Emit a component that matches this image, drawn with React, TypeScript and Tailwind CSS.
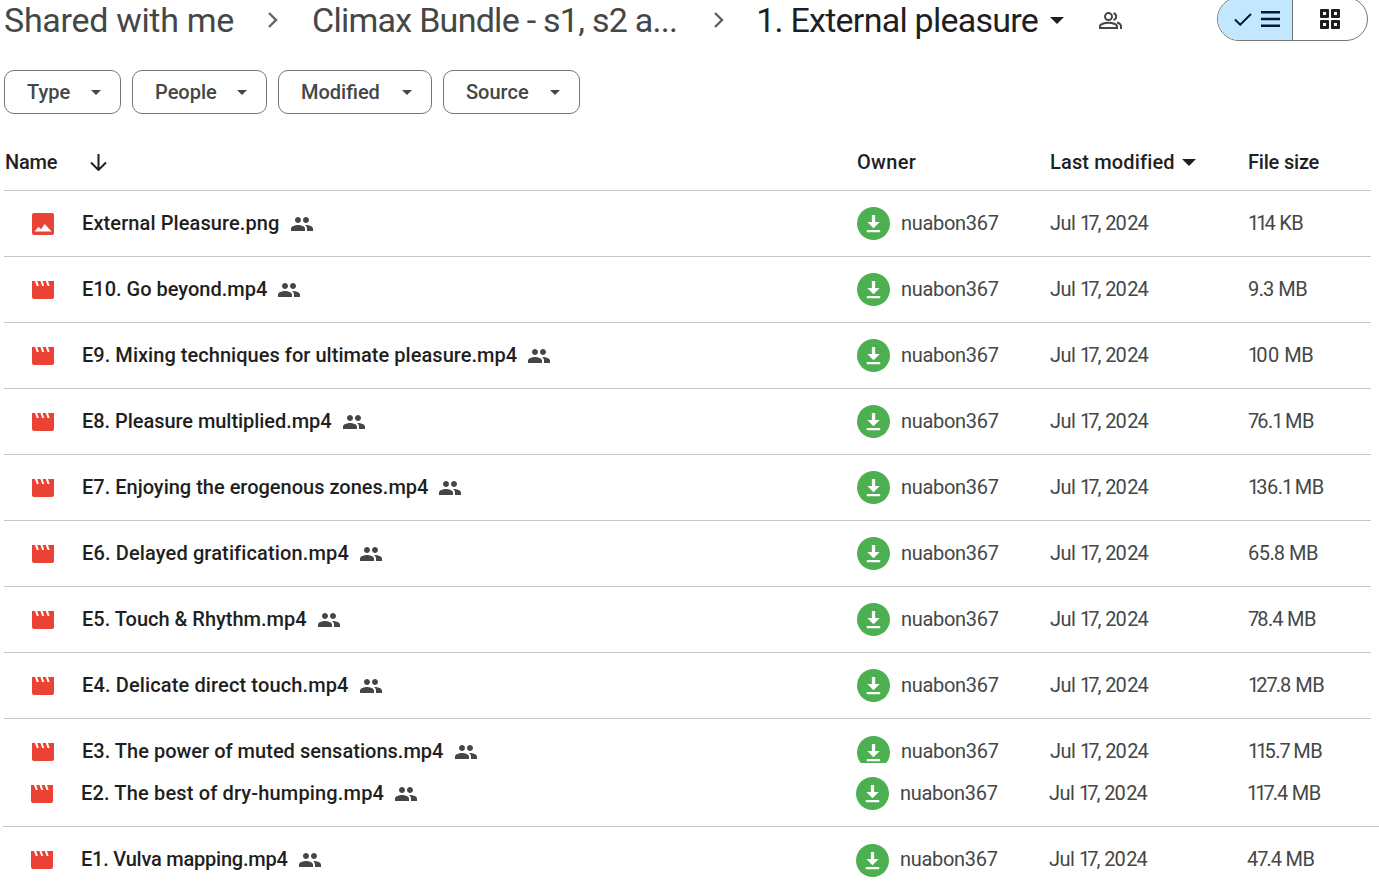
const files = [
  { name: "External Pleasure.png", nameClass: "tracking-[0.1px]", size: "114 KB", image: true },
  { name: "E10. Go beyond.mp4", nameClass: "tracking-[0px]", size: "9.3 MB" },
  { name: "E9. Mixing techniques for ultimate pleasure.mp4", nameClass: "tracking-[0.04px]", size: "100 MB" },
  { name: "E8. Pleasure multiplied.mp4", nameClass: "tracking-[-0.05px]", size: "76.1 MB" },
  { name: "E7. Enjoying the erogenous zones.mp4", nameClass: "tracking-[0px]", size: "136.1 MB" },
  { name: "E6. Delayed gratification.mp4", nameClass: "tracking-[0.13px]", size: "65.8 MB" },
  { name: "E5. Touch & Rhythm.mp4", nameClass: "tracking-[0px]", size: "78.4 MB" },
  { name: "E4. Delicate direct touch.mp4", nameClass: "tracking-[0.13px]", size: "127.8 MB" },
];

const PEOPLE =
  "M16 11c1.66 0 2.99-1.34 2.99-3S17.66 5 16 5c-1.66 0-3 1.34-3 3s1.34 3 3 3zm-8 0c1.66 0 2.99-1.34 2.99-3S9.66 5 8 5C6.34 5 5 6.34 5 8s1.34 3 3 3zm0 2c-2.33 0-7 1.17-7 3.5V19h14v-2.5c0-2.33-4.67-3.5-7-3.5zm8 0c-.29 0-.62.02-.97.05 1.16.84 1.97 1.97 1.97 3.45V19h6v-2.5c0-2.33-4.67-3.5-7-3.5z";

// digits in the original font are proportional, Roboto's are not
const digitClass: Record<string, string> = {
  "1": "tracking-[-3px]",
  "7": "tracking-[-2px]",
  "4": "tracking-[-1px]",
  "2": "tracking-[-1px]",
  ".": "tracking-[-1px]",
  "0": "tracking-[0.5px]",
};

function Digits({ text }: { text: string }) {
  return (
    <span className="pb-[2px] text-[20px] text-[#444746] tracking-[-0.5px] whitespace-nowrap">
      {text.split("").map((c, i) => (
        <span key={i} className={digitClass[c]}>
          {c}
        </span>
      ))}
    </span>
  );
}

function Caret({ className }: { className: string }) {
  return (
    <svg viewBox="0 0 12 6" className={className}>
      <path d="M0 0h12L6 6z" fill="currentColor" />
    </svg>
  );
}

function Chevron() {
  return (
    <svg viewBox="0 0 12 18" className="h-[18px] w-[12px] text-[#5f6368]">
      <path d="M2 2l7 7-7 7" fill="none" stroke="currentColor" strokeWidth="2.4" />
    </svg>
  );
}

function FileIcon({ image }: { image?: boolean }) {
  if (image) {
    return (
      <svg viewBox="0 0 22 22" className="h-[22px] w-[22px] shrink-0">
        <rect width="22" height="22" rx="2" fill="#ea4335" />
        <path d="M2.500 18.500l4-4.700 2.600 2.500 3.500-5.300 7 7.500z" fill="#fff" />
      </svg>
    );
  }
  return (
    <svg viewBox="0 0 22 18" className="h-[18px] w-[22px] shrink-0">
      <path d="M0 0h22v16a2 2 0 0 1-2 2H2a2 2 0 0 1-2-2z" fill="#ea4335" />
      <path d="M3 0h2.200l1.600 5H4.800zM8.400 0h2.200l1.600 5h-2zM13.800 0H16l1.600 5h-2z" fill="#fff" />
    </svg>
  );
}

function Row({
  name,
  nameClass,
  size,
  image,
  className,
}: {
  name: string;
  nameClass: string;
  size: string;
  image?: boolean;
  className: string;
}) {
  return (
    <div className={`grid grid-cols-[853px_193px_198px_1fr] items-center ml-1 border-b border-[#c7c7c7] ${className}`}>
      <div className="flex items-center min-w-0">
        <div className="w-[78px] flex justify-center">
          <FileIcon image={image} />
        </div>
        <span className={`pb-[2px] text-[20px] font-medium text-[#1f1f1f] whitespace-nowrap ${nameClass}`}>{name}</span>
        <svg viewBox="0 0 24 24" className="ml-[10px] h-[24px] w-[24px] text-[#444746]">
          <path d={PEOPLE} fill="currentColor" />
        </svg>
      </div>
      <div className="flex items-center gap-[11px]">
        <div className="h-[33px] w-[33px] rounded-full bg-[#4caf50] flex items-center justify-center">
          <svg viewBox="0 0 24 24" className="h-[23px] w-[23px]">
            <path d="M5 21h14v-2.200H5zM18.500 10.500h-4.800V3h-3.400v7.500H5.500l6.500 6.500z" fill="#fff" />
          </svg>
        </div>
        <span className="pb-[2px] text-[20px] text-[#444746] tracking-[-0.3px]">nuabon367</span>
      </div>
      <Digits text="Jul 17, 2024" />
      <Digits text={size} />
    </div>
  );
}

export default function App() {
  return (
    <div className="h-[895px] w-[1379px] overflow-hidden bg-white font-['Roboto',sans-serif]">
      <header className="flex h-[40px] items-center pl-1 pr-[11px] text-[34px] text-[#444746]">
        <span className="whitespace-nowrap tracking-[-0.3px]">Shared with me</span>
        <div className="mx-[33px]"><Chevron /></div>
        <span className="whitespace-nowrap tracking-[-0.73px]">Climax Bundle - s1, s2 a...</span>
        <div className="ml-[36px] mr-[31px]"><Chevron /></div>
        <span className="whitespace-nowrap tracking-[-0.75px] text-[#1f1f1f]">1. External pleasure</span>
        <Caret className="ml-[12px] h-[7px] w-[14px] text-[#1f1f1f]" />
        <svg viewBox="0 0 23 17" className="ml-[35px] h-[17px] w-[23px] text-[#444746]">
          <circle cx="9.500" cy="4.600" r="3.500" fill="none" stroke="currentColor" strokeWidth="2" />
          <path d="M1 16v-1.600c0-2.400 4.500-3.600 8.500-3.600s8.500 1.200 8.500 3.600V16z" fill="none" stroke="currentColor" strokeWidth="2" />
          <path d="M14.500 1.200a3.500 3.500 0 0 1 0 6.800M18 10.500c2.500.7 4 2 4 3.900V17" fill="none" stroke="currentColor" strokeWidth="2" />
        </svg>
        <div className="ml-auto -mt-[2px] flex h-[44px] w-[151px] shrink-0 overflow-hidden rounded-full border border-[#747775]">
          <div className="flex w-[75px] items-center justify-center gap-[9px] border-r border-[#747775] bg-[#c2e7ff] pl-1 text-[#001d35]">
            <svg viewBox="0 0 18 13" className="h-[13px] w-[18px]">
              <path d="M1 6.500l5.200 5.200L17 1" fill="none" stroke="currentColor" strokeWidth="2" />
            </svg>
            <svg viewBox="0 0 19 16" className="h-[16px] w-[19px]">
              <path d="M0 1.300h19M0 8h19M0 14.700h19" stroke="currentColor" strokeWidth="2.600" />
            </svg>
          </div>
          <div className="flex flex-1 items-center justify-center text-[#1f1f1f]">
            <svg viewBox="0 0 20 20" className="h-[20px] w-[20px]">
              <path
                fillRule="evenodd"
                d="M1 0h7a1 1 0 0 1 1 1v7a1 1 0 0 1-1 1H1a1 1 0 0 1-1-1V1a1 1 0 0 1 1-1zm2 3v3h3V3zM12 0h7a1 1 0 0 1 1 1v7a1 1 0 0 1-1 1h-7a1 1 0 0 1-1-1V1a1 1 0 0 1 1-1zm2 3v3h3V3zM1 11h7a1 1 0 0 1 1 1v7a1 1 0 0 1-1 1H1a1 1 0 0 1-1-1v-7a1 1 0 0 1 1-1zm2 3v3h3v-3zM12 11h7a1 1 0 0 1 1 1v7a1 1 0 0 1-1 1h-7a1 1 0 0 1-1-1v-7a1 1 0 0 1 1-1zm2 3v3h3v-3z"
                fill="currentColor"
              />
            </svg>
          </div>
        </div>
      </header>

      <div className="mt-[30px] flex gap-[11px] pl-1">
        {[
          { label: "Type", w: "w-[117px]" },
          { label: "People", w: "w-[135px]" },
          { label: "Modified", w: "w-[154px]" },
          { label: "Source", w: "w-[137px]" },
        ].map((f) => (
          <button
            key={f.label}
            type="button"
            className={`flex h-[44px] items-center justify-between rounded-[10px] border border-[#747775] pl-[22px] pr-[19px] text-[20px] font-medium text-[#444746] ${f.w}`}
          >
            <span>{f.label}</span>
            <Caret className="h-[5px] w-[10px]" />
          </button>
        ))}
      </div>

      <div className="ml-1 grid h-[77px] w-[1367px] grid-cols-[853px_193px_198px_1fr] items-center border-b border-[#c7c7c7] pt-[20px] text-[20px] font-medium text-[#1f1f1f]">
        <div className="flex items-center">
          <span className="pl-px tracking-[-0.2px]">Name</span>
          <svg viewBox="0 0 17 17" className="ml-[33px] h-[17px] w-[17px]">
            <path d="M8.500 0v16M1 8.500l7.500 7.500L16 8.500" fill="none" stroke="currentColor" strokeWidth="2" />
          </svg>
        </div>
        <span className="tracking-[0.3px]">Owner</span>
        <div className="flex items-center">
          <span className="tracking-[0.15px]">Last modified</span>
          <Caret className="ml-[7px] h-[7px] w-[14px]" />
        </div>
        <span className="tracking-[-0.2px]">File size</span>
      </div>

      <div className="w-[1371px]">
        {files.map((f) => (
          <Row key={f.name} name={f.name} nameClass={f.nameClass} size={f.size} image={f.image} className="h-[66px]" />
        ))}
        <div className="h-[44px] overflow-hidden">
          <Row
            name="E3. The power of muted sensations.mp4"
            nameClass="tracking-[0.02px]"
            size="115.7 MB"
            className="h-[66px] border-b-0"
          />
        </div>
      </div>

      <div className="-ml-px w-[1380px]">
        <Row name="E2. The best of dry-humping.mp4" nameClass="tracking-[0.16px]" size="117.4 MB" className="h-[64px] pb-[2px]" />
        <Row name="E1. Vulva mapping.mp4" nameClass="tracking-[-0.23px]" size="47.4 MB" className="h-[66px] border-b-0" />
      </div>
    </div>
  );
}
